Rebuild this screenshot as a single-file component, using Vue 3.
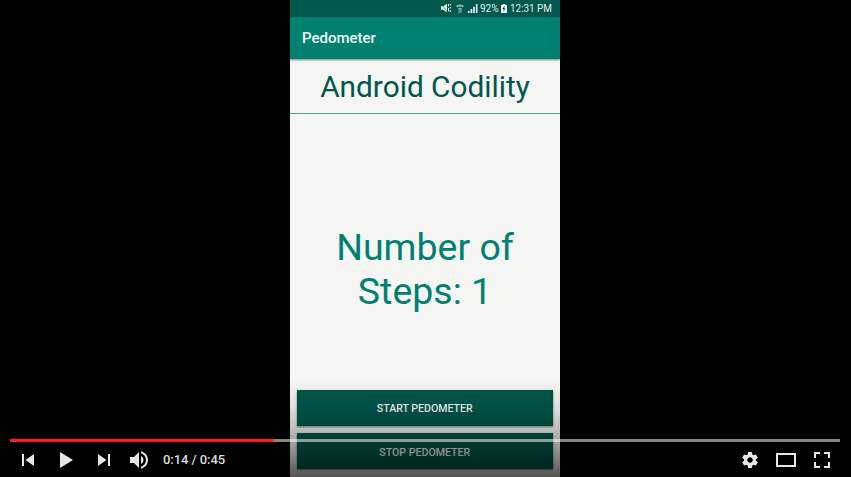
<script setup>
import { ref, computed } from 'vue'

const position = ref('0:14')
const duration = ref('0:45')
const played = ref(31.8)
const steps = ref(1)
const playedWidth = computed(() => `${played.value}%`)
</script>

<template>
  <div class="player">
    <main class="phone">
      <div class="status">
        <svg class="mute" width="10" height="10" viewBox="0 0 10 10">
          <path d="M0 3.2h2L6 .8v8.700L2 6.800H0z" fill="#e4f0ee" />
          <path d="M.3 .8l6 8" stroke="#00574b" stroke-width=".6" />
          <path d="M7.500 1v2.500M7.500 5v3.500M9.300 1v1.500M9.300 4v1.500M9.300 7v2" stroke="#e4f0ee" fill="none" />
        </svg>
        <svg class="wifi" width="8" height="10" viewBox="0 0 8 10">
          <path d="M0 1.8Q4-.6 8 1.8L6.8 3.4Q4 1.6 1.2 3.4z" fill="#8fb9b3" />
          <path d="M2.5 4.8Q4 3.6 5.5 4.8L4 6.6zM3 7v2.500M5 6v2.500" stroke="#b5d0cc" stroke-width=".9" fill="none" />
        </svg>
        <svg class="signal" width="10" height="9" viewBox="0 0 10 9">
          <path d="M0 7h1.700v2H0zM2.600 5h1.700v4H2.600zM5.200 2.800h1.700V9H5.200zM7.900 0h1.600v9H7.900z" fill="#e4f0ee" />
        </svg>
        <svg class="percent" width="19" height="17" viewBox="0 0 19 17">
          <text x="0" y="12" textLength="18.5" lengthAdjust="spacingAndGlyphs">92%</text>
        </svg>
        <svg class="battery" width="6" height="9" viewBox="0 0 6 9">
          <path d="M1.7 0h2.6v1H6v8H0V1h1.700z" fill="#f2f8f7" />
          <path d="M3.7 1.800L1.400 5h1.400l-.6 2.600L4.600 4.400H3.200z" fill="#00342d" />
        </svg>
        <svg class="clock" width="44" height="17" viewBox="0 0 44 17">
          <text x="1" y="12" textLength="42" lengthAdjust="spacingAndGlyphs">12:31 PM</text>
        </svg>
      </div>
      <header class="appbar">Pedometer</header>
      <h1 class="title">Android Codility</h1>
      <section class="steps">Number of<br />Steps: {{ steps }}</section>
      <div class="actions">
        <button class="action">START PEDOMETER</button>
        <button class="action stop">STOP PEDOMETER</button>
      </div>
    </main>

    <div class="overlay">
      <div class="track"><div class="played" :style="{ width: playedWidth }"></div></div>
      <div class="controls">
        <svg class="icon" viewBox="0 0 36 36"><path d="M12 12h2v12h-2zM15.5 18l8.5 6V12z" /></svg>
        <svg class="icon gap" viewBox="0 0 36 36"><path d="M12 10v16l13-8z" /></svg>
        <svg class="icon gap" viewBox="0 0 36 36"><path d="M12 24l8.500-6L12 12zM22 12v12h2V12z" /></svg>
        <svg class="icon" viewBox="0 0 36 36">
          <path d="M8 21h4l5 5V10l-5 5H8zM19 14v8c1.480-.68 2.500-2.230 2.500-4 0-1.740-1.020-3.260-2.500-4zM19 11.290c2.890.86 5 3.540 5 6.710s-2.110 5.850-5 6.710v2.060c4.010-.91 7-4.490 7-8.770s-2.990-7.860-7-8.770z" />
        </svg>
        <span class="time">{{ position }} / {{ duration }}</span>
        <div class="right">
          <svg class="icon" viewBox="0 0 36 36">
            <path d="m 23.94,18.78 c .03,-0.25 .05,-0.51 .05,-0.78 0,-0.27 -0.02,-0.52 -0.05,-0.78 l 1.68,-1.32 c .15,-0.12 .19,-0.33 .09,-0.51 l -1.6,-2.76 c -0.09,-0.17 -0.31,-0.24 -0.48,-0.17 l -1.99,.8 c -0.41,-0.32 -0.86,-0.58 -1.35,-0.78 l -0.30,-2.12 c -0.02,-0.19 -0.19,-0.33 -0.39,-0.33 l -3.2,0 c -0.2,0 -0.36,.14 -0.39,.33 l -0.30,2.12 c -0.48,.2 -0.93,.47 -1.35,.78 l -1.99,-0.8 c -0.18,-0.07 -0.39,0 -0.48,.17 l -1.6,2.76 c -0.10,.17 -0.05,.39 .09,.51 l 1.68,1.32 c -0.03,.25 -0.05,.52 -0.05,.78 0,.26 .02,.52 .05,.78 l -1.68,1.32 c -0.15,.12 -0.19,.33 -0.09,.51 l 1.6,2.76 c .09,.17 .31,.24 .48,.17 l 1.99,-0.8 c .41,.32 .86,.58 1.35,.78 l .30,2.12 c .02,.19 .19,.33 .39,.33 l 3.2,0 c .2,0 .36,-0.14 .39,-0.33 l .30,-2.12 c .48,-0.2 .93,-0.47 1.35,-0.78 l 1.99,.8 c .18,.07 .39,0 .48,-0.17 l 1.6,-2.76 c .09,-0.17 .05,-0.39 -0.09,-0.51 l -1.68,-1.32 z m -5.94,2.01 c -1.54,0 -2.8,-1.25 -2.8,-2.8 0,-1.54 1.25,-2.8 2.8,-2.8 1.54,0 2.8,1.25 2.8,2.8 0,1.54 -1.25,2.8 -2.8,2.8 z" />
          </svg>
          <svg class="icon" viewBox="0 0 36 36"><path fill-rule="evenodd" d="M28 11v14H8V11zM10 13v10h16V13z" /></svg>
          <svg class="icon" viewBox="0 0 36 36">
            <path d="M10 16h2v-4h4v-2h-6zM20 10v2h4v4h2v-6zM24 24h-4v2h6v-6h-2zM12 20h-2v6h6v-2h-4z" />
          </svg>
        </div>
      </div>
    </div>
  </div>
</template>

<style>
body { background: #000; overflow: hidden; }
</style>

<style scoped>
.player {
  position: relative;
  display: flex;
  justify-content: center;
  width: 851px;
  height: 477px;
  overflow: hidden;
  background: #000;
  font-family: Roboto, "Liberation Sans", sans-serif;
}
.phone {
  display: flex;
  flex-direction: column;
  width: 270px;
  height: 477px;
  margin-right: 1px;
  background: #f5f5f4;
}
.status {
  display: flex;
  align-items: center;
  justify-content: flex-end;
  flex: 0 0 17px;
  box-sizing: border-box;
  padding-right: 7px;
  background: #00574b;
}
.status svg { flex: none; overflow: visible; }
.status text { fill: #e4f0ee; font-size: 11.5px; }
.mute { margin-bottom: 1px; }
.wifi { margin-left: 5px; }
.signal { margin-left: 4px; }
.percent { margin-left: 2px; }
.battery { margin-left: 2px; }
.clock { margin-left: 2px; }
.appbar {
  flex: none;
  height: 41.5px;
  box-sizing: border-box;
  padding-left: 12px;
  background: #008070;
  box-shadow: 0 1px 2px rgba(0, 0, 0, .5);
  color: #f2faf8;
  font-size: 15px;
  font-weight: 500;
  line-height: 43px;
}
.title {
  flex: none;
  height: 55.5px;
  box-sizing: border-box;
  margin: 0;
  border-bottom: 1px solid #4f9e94;
  color: #00574b;
  font-size: 29.8px;
  font-weight: 400;
  line-height: 56px;
  text-align: center;
}
.steps {
  flex: 1;
  display: flex;
  flex-direction: column;
  justify-content: center;
  padding-top: 33px;
  color: #008070;
  font-size: 37.5px;
  line-height: 44px;
  text-align: center;
}
.actions {
  display: flex;
  flex-direction: column;
  gap: 7px;
  padding: 0 7.5px 8px 7px;
}
.action {
  height: 36px;
  padding: 1px 0 0;
  border: 0;
  background: #00574b;
  box-shadow: 0 1px 2px rgba(0, 0, 0, .5);
  color: #f5f5f5;
  font: 500 10.6px/36px Roboto, sans-serif;
}
.stop { padding-top: 2px; }
.overlay {
  position: absolute;
  inset: auto 0 0;
  display: flex;
  flex-direction: column;
  justify-content: flex-end;
  height: 97px;
  background: linear-gradient(rgba(0, 0, 0, 0), rgba(0, 0, 0, .08) 25%, rgba(0, 0, 0, .22) 50%, rgba(0, 0, 0, .43) 75%, rgba(0, 0, 0, .65));
}
.track {
  flex: 0 0 3px;
  margin: 0 11px 0 10px;
  background: rgba(255, 255, 255, .53);
}
.played { height: 3px; background: #ff1d1d; }
.controls {
  display: flex;
  align-items: center;
  flex: 0 0 36px;
  margin-bottom: -1px;
  padding: 0 11px 0 10px;
}
.icon { flex: none; width: 36px; height: 36px; fill: #e6e6e6; }
.gap { margin-left: 2px; }
.time { margin-left: 5px; color: #ddd; font-size: 13px; font-weight: 500; letter-spacing: -.05px; line-height: 36px; }
.right { display: flex; margin-left: auto; }
</style>
